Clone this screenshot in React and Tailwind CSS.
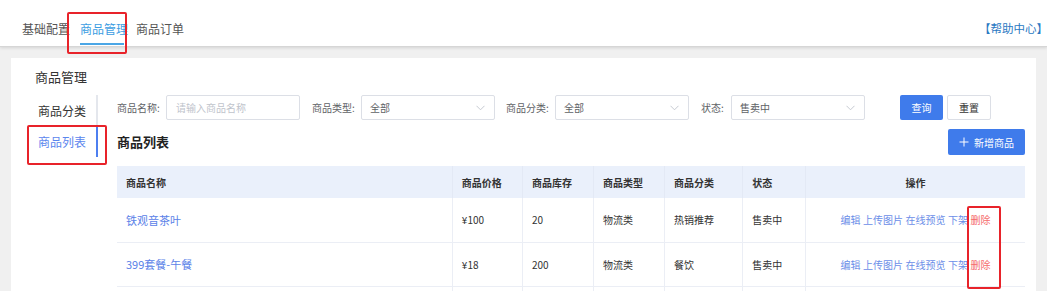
import React from "react";

const F = { fontFamily: '"Noto Sans CJK SC", "Noto Sans", sans-serif' };

function Chevron() {
  return (
    <svg width="9" height="6" viewBox="0 0 9 6" className="shrink-0">
      <path d="M0.5 0.8 L4.5 4.8 L8.5 0.8" fill="none" stroke="#c0c4cc" strokeWidth="0.9" />
    </svg>
  );
}

function Select({ value }) {
  return (
    <div className="flex h-[25px] w-[134px] items-center justify-between rounded-[2px] border border-[#dcdfe6] bg-white pl-[8px] pr-[9px] text-[10px] text-[#606266]">
      <span>{value}</span>
      <Chevron />
    </div>
  );
}

const cols = [
  { w: 335, t: "商品名称" },
  { w: 70, t: "商品价格" },
  { w: 71, t: "商品库存" },
  { w: 71, t: "商品类型" },
  { w: 78, t: "商品分类" },
  { w: 63, t: "状态" },
  { w: 219, t: "操作", center: true },
];

const rows = [
  ["铁观音茶叶", "¥100", "20", "物流类", "热销推荐", "售卖中"],
  ["399套餐-午餐", "¥18", "200", "物流类", "餐饮", "售卖中"],
];

export default function App() {
  return (
    <div style={F} className="relative h-[291px] w-[1047px] overflow-hidden bg-[#f0f0f0]">
      {/* top bar */}
      <div className="flex h-[47px] items-center justify-between border-b border-[#d6d6d6] bg-white shadow-[0_1px_3px_rgba(0,0,0,0.12)]">
        <div className="flex h-full pl-[22px] text-[12px]">
          <div className="flex h-full items-center pt-[11px] text-[#555]">基础配置</div>
          <div className="relative ml-[10px] flex h-full items-center pt-[11px] text-[#3c9de2]">
            商品管理
            <div className="absolute bottom-[1px] left-0 h-[2px] w-[44px] bg-[#4aa6e6]" />
          </div>
          <div className="ml-[8px] flex h-full items-center pt-[11px] text-[#555]">商品订单</div>
        </div>
        <div className="mr-[-1px] pt-[11px] text-[11.5px] text-[#2a78c2]">【帮助中心】</div>
      </div>

      {/* card */}
      <div className="ml-[11px] mr-[11px] mt-[11px] bg-white pt-[10px]">
        <div className="pl-[24px] text-[13px] leading-[18px] text-[#333]">商品管理</div>
        <div className="mt-[9px] flex">
          {/* left nav */}
          <div className="ml-[16px] w-[71px]">
            <div className="flex h-[31px] items-center border-r-2 border-[#e4e7ed] pl-[11px] text-[12px] text-[#333]">
              商品分类
            </div>
            <div className="flex h-[31px] items-center border-r-2 border-[#4d7ff0] pl-[11px] text-[12px] text-[#5b86ee]">
              商品列表
            </div>
          </div>

          {/* main */}
          <div className="ml-[19px] w-[908px]">
            {/* filter row */}
            <div className="flex h-[25px] items-center text-[10px] text-[#606266]">
              <span className="w-[49px]">商品名称:</span>
              <div className="flex h-[25px] w-[134px] items-center rounded-[2px] border border-[#dcdfe6] pl-[9px] text-[10px] text-[#c0c4cc]">
                请输入商品名称
              </div>
              <span className="ml-[12px] w-[49px]">商品类型:</span>
              <Select value="全部" />
              <span className="ml-[11px] w-[49px]">商品分类:</span>
              <Select value="全部" />
              <span className="ml-[12px] w-[30px]">状态:</span>
              <Select value="售卖中" />
              <button className="ml-[35px] flex h-[25px] w-[43px] items-center justify-center rounded-[2px] bg-[#3f7beb] text-[10px] text-white">
                查询
              </button>
              <button className="ml-[4px] flex h-[25px] w-[44px] items-center justify-center rounded-[2px] border border-[#dcdfe6] bg-white text-[10px] text-[#333]">
                重置
              </button>
            </div>

            {/* heading row */}
            <div className="mt-[9px] flex h-[26px] items-center justify-between">
              <span className="text-[13px] font-bold text-[#222]">商品列表</span>
              <button className="flex h-[26px] w-[77px] items-center justify-center gap-[5px] rounded-[2px] bg-[#3f7beb] text-[10px] text-white">
                <svg width="10" height="10" viewBox="0 0 10 10">
                  <path d="M5 0.5V9.5M0.5 5H9.5" stroke="white" strokeWidth="1" />
                </svg>
                新增商品
              </button>
            </div>

            {/* table */}
            <table className="mt-[11px] w-[908px] table-fixed border-collapse text-[10px]">
              <colgroup>
                {cols.map((c, i) => (
                  <col key={i} style={{ width: c.w }} />
                ))}
              </colgroup>
              <thead>
                <tr className="h-[32px] bg-[#eaf0fb]">
                  {cols.map((c, i) => (
                    <th
                      key={i}
                      className={`border-r border-[#e3e9f5] px-[9px] font-bold text-[#333] last:border-r-0 ${c.center ? "text-center" : "text-left"}`}
                    >
                      {c.t}
                    </th>
                  ))}
                </tr>
              </thead>
              <tbody>
                {rows.map((r, i) => (
                  <tr key={i} className="h-[44px] border-b border-[#ebeef5]">
                    <td className="border-r border-[#ebeef5] px-[9px] text-[11px] text-[#5b82e8]">{r[0]}</td>
                    {r.slice(1).map((v, j) => (
                      <td key={j} className="border-r border-[#ebeef5] px-[9px] text-[#333]">
                        {v}
                      </td>
                    ))}
                    <td className="px-[4px]">
                      <div className="flex justify-center gap-[2.5px] text-[#6b8ee8]">
                        <span>编辑</span>
                        <span>上传图片</span>
                        <span>在线预览</span>
                        <span>下架</span>
                        <span className="text-[#f56c6c]">删除</span>
                      </div>
                    </td>
                  </tr>
                ))}
                <tr className="h-[44px]">
                  {cols.map((c, i) => (
                    <td key={i} className="border-r border-[#ebeef5] last:border-r-0" />
                  ))}
                </tr>
              </tbody>
            </table>
          </div>
        </div>
      </div>

      {/* red annotation boxes */}
      <div className="pointer-events-none absolute left-[67px] top-[12px] h-[42px] w-[60px] rounded-[2px] border-2 border-[#e8232a]" />
      <div className="pointer-events-none absolute left-[27px] top-[125px] h-[40px] w-[80px] rounded-[2px] border-2 border-[#e8232a]" />
      <div className="pointer-events-none absolute left-[967px] top-[206px] h-[83px] w-[34px] rounded-[2px] border-2 border-[#e8232a]" />
    </div>
  );
}
